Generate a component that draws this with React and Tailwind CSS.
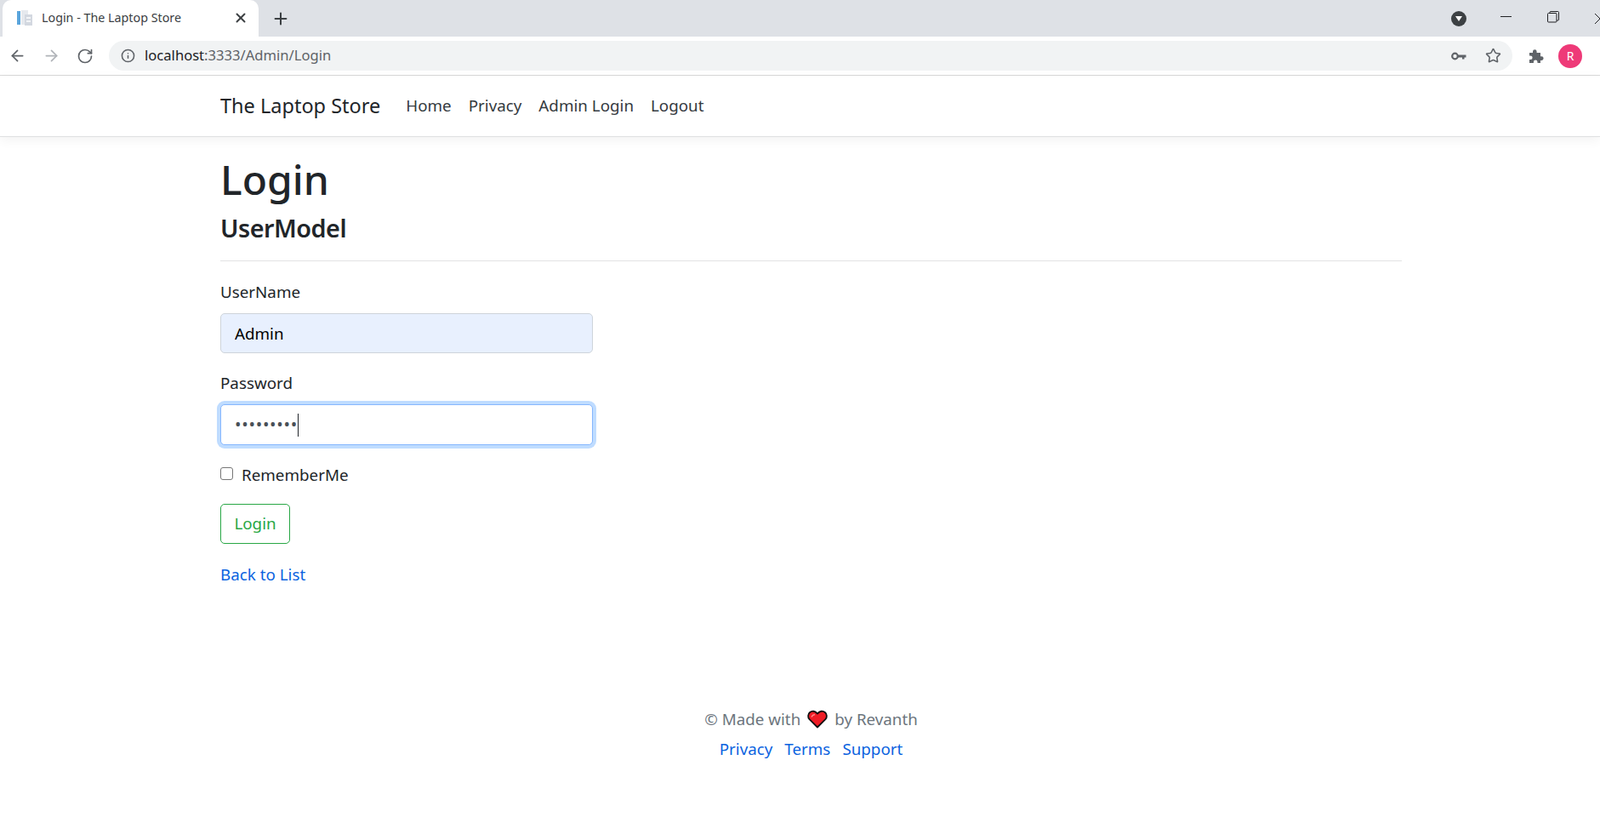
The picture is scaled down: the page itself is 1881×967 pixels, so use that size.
import React from 'react';
import { ArrowLeft, ArrowRight, RotateCw, Info, X, Plus, Star } from 'lucide-react';

const uiFont = { fontFamily: '"Noto Sans", "Open Sans", sans-serif' };

const Favicon = () => (
  <svg width="20" height="20" viewBox="0 0 20 20">
    <rect x="1" y="2" width="4" height="16" fill="#5aa5dc" />
    <rect x="6" y="1" width="8" height="17" fill="#e6e9ee" />
    <rect x="10" y="6" width="9" height="13" fill="#d3d8e0" />
    <rect x="12" y="9" width="5" height="2" fill="#f2f4f7" />
    <rect x="12" y="13" width="5" height="2" fill="#f2f4f7" />
  </svg>
);

const Heart = () => (
  <svg width="24" height="22" viewBox="0 0 24 22" className="mx-[8px] mb-[2px]">
    <path d="M12 20.5 2.6 11.2C.4 8.8.7 5 3.1 3 5.600.9 9.400 1.200 12 4.600 14.600 1.200 18.400.9 20.900 3c2.400 2 2.700 5.800.5 8.200Z" fill="#ee1c25" stroke="#111" strokeWidth="1.800" strokeLinejoin="round" />
    <path d="M5 8.500c.8-1.700 2.200-2.600 4-2.900" fill="none" stroke="#ff8a8a" strokeWidth="1.500" />
  </svg>
);

const TabBar = () => (
  <div className="flex h-[43px] items-end bg-[#dee1e6]">
    <div className="ml-[3px] flex h-[43px] w-[301px] items-center rounded-t-[10px] bg-white pb-[2px] pl-[16px] pr-[12px]">
      <Favicon />
      <span className="ml-[10px] flex-1 text-[14.300px] text-[#3c4043]" style={uiFont}>Login - The Laptop Store</span>
      <X size={18} strokeWidth={2.600} className="text-[#3c4043]" />
    </div>
    <div className="ml-[15px] flex h-[43px] items-center">
      <Plus size={22} strokeWidth={2.200} className="text-[#3c4043]" />
    </div>
    <div className="ml-auto flex h-[43px] items-center">
      <div className="mr-[40px] mt-[1px] flex h-[18px] w-[18px] items-center justify-center rounded-full bg-[#3c4043]">
        <svg width="8" height="6" viewBox="0 0 8 6"><path d="M0 0h8L4 6Z" fill="#fff" /></svg>
      </div>
      <div className="mb-[4px] mr-[42px] h-px w-[13px] bg-[#202124]" />
      <svg width="14" height="14" viewBox="0 0 14 14" className="mb-[4px] mr-[41px]" fill="none" stroke="#202124">
        <rect x=".5" y="2.500" width="10.500" height="10.500" rx="1" />
        <path d="M3 2.500V1.500a1 1 0 0 1 1-1h8.500a1 1 0 0 1 1 1V10a1 1 0 0 1-1 1H11" />
      </svg>
      <div className="h-[14px] w-[7px] overflow-hidden">
        <svg width="14" height="14" viewBox="0 0 14 14" stroke="#202124"><path d="M1 1l12 12M13 1 1 13" /></svg>
      </div>
    </div>
  </div>
);

const Toolbar = () => (
  <div className="flex h-[46px] items-center border-b border-[#d9d9d9] bg-white">
    <ArrowLeft size={21} strokeWidth={2} className="ml-[10px] text-[#5f6368]" />
    <ArrowRight size={21} strokeWidth={2} className="ml-[19px] text-[#b0b3b8]" />
    <RotateCw size={20} strokeWidth={2} className="ml-[19px] text-[#5f6368]" />
    <div className="ml-[18px] flex h-[35px] w-[1650px] items-center rounded-full bg-[#f1f3f4] pl-[14px] pr-[13px]">
      <Info size={17} strokeWidth={2.200} className="text-[#5f6368]" />
      <span className="ml-[11px] flex-1 text-[16.600px] text-[#202124]" style={uiFont}>
        localhost<span className="text-[#5f6368]">:3333/Admin/Login</span>
      </span>
      <svg width="18" height="10" viewBox="0 0 18 10" className="mr-[22px]">
        <circle cx="4.500" cy="5" r="3.300" fill="none" stroke="#5f6368" strokeWidth="2.200" />
        <path d="M8 3.500h9.500v3h-2v2h-2.500v-2H8Z" fill="#5f6368" />
      </svg>
      <Star size={19} strokeWidth={2} className="text-[#5f6368]" />
    </div>
    <svg width="18" height="18" viewBox="0 0 18 18" className="ml-[19px]">
      <path d="M1 5h4V3.500a2.300 2.300 0 0 1 4.600 0V5H14v4.300h1.300a2.300 2.300 0 0 1 0 4.600H14V17h-3.500v-1.300a2.300 2.300 0 0 0-4.600 0V17H1v-4h1.300a2.300 2.300 0 0 0 0-4.600H1Z" fill="#5f6368" />
    </svg>
    <div className="ml-[17px] flex h-[28px] w-[28px] items-center justify-center rounded-full bg-[#ee3a78] text-[14px] text-white" style={uiFont}>R</div>
  </div>
);

const Navbar = () => (
  <nav className="flex h-[72px] items-center border-b border-[#dfe0e1] bg-white pl-[259px] shadow-[0_4px_12px_rgba(0,0,0,0.05)]">
    <a className="mr-[20px] text-[23.500px] text-[#212529]">The Laptop Store</a>
    {['Home', 'Privacy', 'Admin Login', 'Logout'].map(item => (
      <a key={item} className="px-[10px] text-[18.800px] text-[#343a40]">{item}</a>
    ))}
  </nav>
);

const LoginForm = () => (
  <main className="ml-[259px] w-[1389px]">
    <h1 className="mt-[21px] text-[48px] font-medium leading-[58px] text-[#212529]">Login</h1>
    <h4 className="mt-[10px] text-[28.800px] font-semibold leading-[35px] tracking-[-0.500px] text-[#212529]">UserModel</h4>
    <hr className="mt-[21px] border-[#e2e3e4]" />
    <div className="w-[438px]">
      <label className="mt-[22px] block text-[18.800px] leading-[29px] text-[#212529]">UserName</label>
      <input
        readOnly
        value="Admin"
        className="mt-[10px] block h-[47px] w-full rounded-[5px] border border-[#ced4da] bg-[#e8f0fe] px-[16px] text-[18.800px] text-[#000]"
      />
      <label className="mt-[21px] block text-[18.800px] leading-[29px] text-[#212529]">Password</label>
      <div className="mt-[10px] flex h-[48px] w-full items-center rounded-[5px] border border-[#86b7fe] bg-white px-[16px] shadow-[0_0_0_4px_#bfdcff]">
        <span className="text-[20px] leading-none tracking-[0.700px] text-[#495057]">•••••••••</span>
        <span className="h-[27px] w-px bg-[#212529]" />
      </div>
      <div className="mt-[21px] flex h-[29px] items-center">
        <input type="checkbox" className="mb-[5px] h-[15px] w-[15px] appearance-none rounded-[3px] border border-[#767676] bg-white" />
        <span className="ml-[10px] text-[18.800px] text-[#212529]">RememberMe</span>
      </div>
      <button className="mt-[19px] block h-[47px] w-[82px] rounded-[5px] border border-[#28a745] bg-white text-[18.800px] text-[#28a745]">Login</button>
    </div>
    <a className="mt-[22px] block text-[18.800px] leading-[29px] text-[#0b63e0]">Back to List</a>
    <footer className="mt-[141px] flex flex-col items-center text-[18.800px]">
      <div className="flex h-[29px] items-center text-[#6c757d]">
        © Made with <Heart /> by Revanth
      </div>
      <div className="mt-[6px] flex gap-[14px] leading-[29px] text-[#0b63e0]">
        <a>Privacy</a>
        <a>Terms</a>
        <a>Support</a>
      </div>
    </footer>
  </main>
);

export default function App() {
  return (
    <div className="h-[967px] overflow-hidden bg-white" style={uiFont}>
      <TabBar />
      <Toolbar />
      <Navbar />
      <LoginForm />
    </div>
  );
}
